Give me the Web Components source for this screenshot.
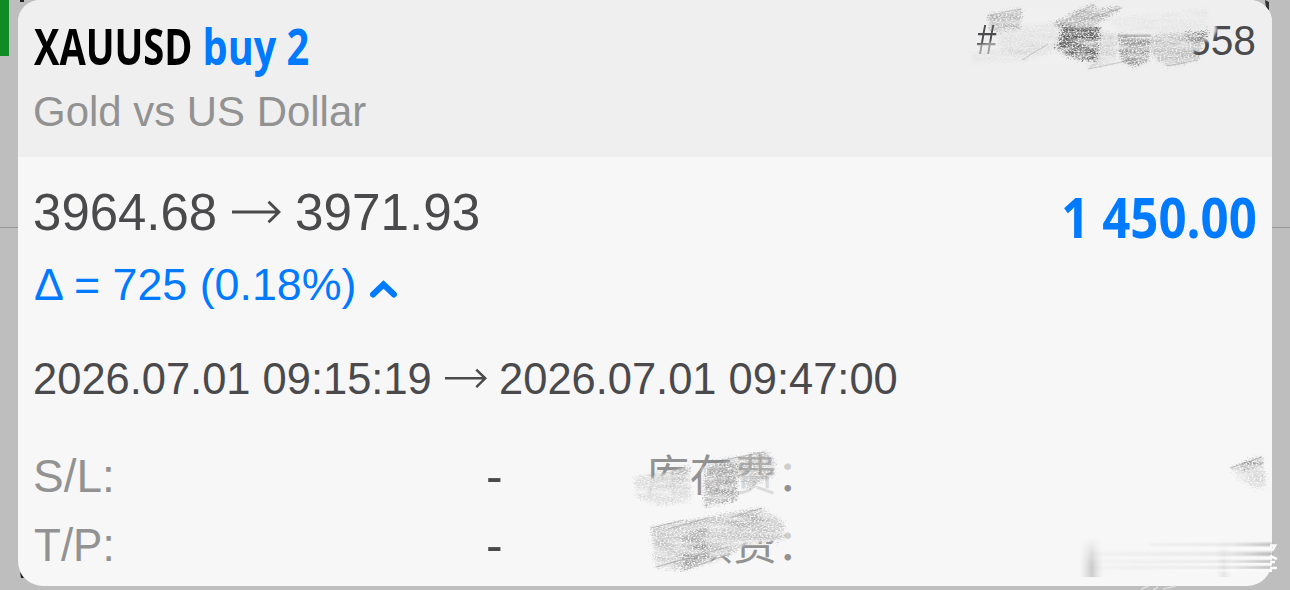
<!DOCTYPE html>
<html lang="zh">
<head>
<meta charset="utf-8">
<title>XAUUSD</title>
<style>
  body {
    margin: 0;
    width: 1290px;
    height: 590px;
    overflow: hidden;
    position: relative;
    background: #bebebe;
    font-family: "Liberation Sans", "Noto Sans CJK SC", sans-serif;
  }
</style>
</head>
<body>
<chart-backdrop></chart-backdrop>
<deal-card>
  <deal-header slot="header">
    <fit-text slot="symbol" face="Open Sans" weight="700" size="50" width="157">XAUUSD</fit-text>
    <fit-text slot="side" face="Open Sans" weight="700" size="50" width="103">buy 2</fit-text>
    <fit-text slot="ticket-start" size="42" width="20">#</fit-text>
    <fit-text slot="ticket-end" size="43" width="66">558</fit-text>
    <fit-text slot="name" size="42.5" width="331">Gold vs US Dollar</fit-text>
  </deal-header>
  <deal-prices>
    <fit-text slot="open" size="52.5" width="180">3964.68</fit-text>
    <fit-text slot="close" size="52.5" width="181">3971.93</fit-text>
    <fit-text slot="profit" face="Open Sans" weight="700" size="56" width="191">1 450.00</fit-text>
    <fit-text slot="delta" size="45" width="322">Δ = 725 (0.18%)</fit-text>
    <fit-text slot="opened" size="44.5" width="395">2026.07.01 09:15:19</fit-text>
    <fit-text slot="closed" size="44.5" width="396">2026.07.01 09:47:00</fit-text>
  </deal-prices>
  <deal-field label="S/L:" label-width="76" cost="库存费：">-</deal-field>
  <deal-field label="T/P:" label-width="76" cost="手续费：">-</deal-field>
</deal-card>
<scribble-layer></scribble-layer>

<script>
  // one run of text, squeezed so its ink is exactly `width` px wide
  class FitText extends HTMLElement {
    constructor() {
      super();
      this.attachShadow({ mode: 'open' });
      this.shadowRoot.innerHTML = `
        <style>
          :host {
            display: block;
            flex: none;
            white-space: nowrap;
          }
          span {
            display: block;
            width: max-content;
            transform-origin: 0 0;
          }
        </style>
        <span><slot></slot></span>
      `;
    }

    connectedCallback() {
      const face = this.getAttribute('face') || 'Liberation Sans';
      const weight = this.getAttribute('weight') || '400';
      const size = this.getAttribute('size');
      const width = Number(this.getAttribute('width'));
      const ctx = document.createElement('canvas').getContext('2d');
      ctx.font = `${weight} ${size}px "${face}"`;
      const box = ctx.measureText(this.textContent);
      const left = -box.actualBoundingBoxLeft;
      const scale = width / (box.actualBoundingBoxRight - left);

      this.style.width = width + 'px';
      this.style.font = `${weight} ${size}px/1 "${face}", sans-serif`;
      this.style.lineHeight = 'inherit';
      this.shadowRoot.querySelector('span').style.transform =
        `scaleX(${scale}) translateX(${-left}px)`;
    }
  }

  class LongArrow extends HTMLElement {
    constructor() {
      super();
      this.attachShadow({ mode: 'open' });
      this.shadowRoot.innerHTML = `
        <style>
          :host { display: block; flex: none; }
          svg { display: block; width: 100%; }
        </style>
        <svg viewBox="0 0 49 24" fill="none" stroke="#4a4a4d" stroke-width="2.9">
          <path d="M0 12H47M36.5 1.8L47 12L36.5 22.2"/>
        </svg>
      `;
    }
  }

  class ChartBackdrop extends HTMLElement {
    constructor() {
      super();
      this.attachShadow({ mode: 'open' });
      this.shadowRoot.innerHTML = `
        <style>
          :host { position: absolute; inset: 0; }
          svg { display: block; }
        </style>
        <svg width="1290" height="590">
          <rect width="9" height="56" fill="#118b25"/>
          <path d="M0 227.5H1290" stroke="#989898"/>
          <path d="M20 0H24V2H20ZM20 572L24 578H21Z" fill="#222"/>
          <path d="M1265 0L1269 2V11L1266 8Z" fill="#333"/>
        </svg>
      `;
    }
  }

  class DealCard extends HTMLElement {
    constructor() {
      super();
      this.attachShadow({ mode: 'open' });
      this.shadowRoot.innerHTML = `
        <style>
          :host {
            display: flex;
            flex-direction: column;
            position: relative;
            box-sizing: border-box;
            margin: 0 18px;
            height: 586px;
            overflow: hidden;
            border-radius: 22px 22px 25px 25px;
            background: #f7f7f7;
          }
        </style>
        <slot name="header"></slot>
        <slot></slot>
      `;
    }
  }

  class DealHeader extends HTMLElement {
    constructor() {
      super();
      this.attachShadow({ mode: 'open' });
      this.shadowRoot.innerHTML = `
        <style>
          :host {
            display: block;
            box-sizing: border-box;
            height: 157px;
            padding: 10px 17px 0 16px;
            background: #efefef;
          }
          .row { display: flex; line-height: 72px; height: 72px; }
          .symbol { color: #000; }
          .side { color: #007aff; margin-left: 14px; }
          .ticket {
            display: flex;
            gap: 192px;
            margin-left: auto;
            margin-top: -6px;
            color: #4a4a4d;
          }
          .name { line-height: 60px; color: #929292; margin-left: 1px; }
        </style>
        <div class="row">
          <div class="symbol"><slot name="symbol"></slot></div>
          <div class="side"><slot name="side"></slot></div>
          <div class="ticket">
            <slot name="ticket-start"></slot>
            <slot name="ticket-end"></slot>
          </div>
        </div>
        <div class="name"><slot name="name"></slot></div>
      `;
    }
  }

  class DealPrices extends HTMLElement {
    constructor() {
      super();
      this.attachShadow({ mode: 'open' });
      this.shadowRoot.innerHTML = `
        <style>
          :host {
            display: block;
            box-sizing: border-box;
            height: 285px;
            padding: 20px 17px 0 17px;
            color: #4a4a4d;
          }
          .row { display: flex; align-items: center; }
          .price { line-height: 70px; height: 70px; }
          .price long-arrow { width: 49px; margin: 0 16px 0 17px; }
          .profit { margin-left: auto; color: #007aff; padding-top: 8px; }
          .delta { line-height: 75px; height: 72px; align-items: flex-start; color: #007aff; }
          .delta svg { margin: 32px 0 0 13px; }
          .time { line-height: 61px; height: 61px; margin-top: 29px; }
          .time long-arrow { width: 42px; margin: 0 14px 0 15px; }
        </style>
        <div class="row price">
          <slot name="open"></slot>
          <long-arrow></long-arrow>
          <slot name="close"></slot>
          <div class="profit"><slot name="profit"></slot></div>
        </div>
        <div class="row delta">
          <slot name="delta"></slot>
          <svg width="27" height="19" viewBox="0 0 27 19" fill="none" stroke="#007aff"
            stroke-width="6" stroke-linecap="round"><path d="M3 15.5L13.5 5.5L24 15.5"/></svg>
        </div>
        <div class="row time">
          <slot name="opened"></slot>
          <long-arrow></long-arrow>
          <slot name="closed"></slot>
        </div>
      `;
    }
  }

  class DealField extends HTMLElement {
    constructor() {
      super();
      this.attachShadow({ mode: 'open' });
    }

    connectedCallback() {
      this.shadowRoot.innerHTML = `
        <style>
          :host {
            display: grid;
            grid-template-columns: 451px 160px 1fr;
            flex: none;
            height: 69px;
            line-height: 69px;
            padding-left: 17px;
            color: #929292;
          }
          .value { color: #4a4a4d; font-size: 50px; }
          .cost {
            font-size: 43px;
            line-height: 60px;
            letter-spacing: 0.7px;
            font-family: "Noto Sans CJK SC", sans-serif;
            white-space: nowrap;
          }
        </style>
        <fit-text size="46" width="${this.getAttribute('label-width')}">${this.getAttribute('label')}</fit-text>
        <div class="value"><slot></slot></div>
        <div class="cost">${this.getAttribute('cost')}</div>
      `;
    }
  }

  // eraser marks over the ticket number and the costs
  class ScribbleLayer extends HTMLElement {
    constructor() {
      super();
      this.attachShadow({ mode: 'open' });
      this.shadowRoot.innerHTML = `
        <style>
          :host { position: absolute; inset: 0; }
          svg { display: block; }
        </style>
        <svg width="1290" height="590">
          <defs>
            <filter id="grain" x="-10%" y="-10%" width="120%" height="120%">
              <feTurbulence type="fractalNoise" baseFrequency="0.5 0.8" numOctaves="3" seed="4" result="n"/>
              <feColorMatrix in="n" values="0 0 0 0 0  0 0 0 0 0  0 0 0 0 0  0 0 0 3 -0.8" result="holes"/>
              <feTurbulence type="fractalNoise" baseFrequency="0.04 0.2" numOctaves="2" seed="9" result="m"/>
              <feColorMatrix in="m" values="0 0 0 0 0  0 0 0 0 0  0 0 0 0 0  0 0 0 1.6 0" result="bands"/>
              <feGaussianBlur in="SourceGraphic" stdDeviation="1.3" result="edge"/>
              <feDisplacementMap in="edge" in2="n" scale="12" xChannelSelector="R" yChannelSelector="G" result="rough"/>
              <feComposite in="rough" in2="holes" operator="in" result="grained"/>
              <feComposite in="grained" in2="bands" operator="in"/>
              <feGaussianBlur stdDeviation="0.6"/>
            </filter>
            <filter id="soft"><feGaussianBlur stdDeviation="1"/></filter>
            <linearGradient id="smear" x2="1">
              <stop offset="0" stop-color="#d5d5d5" stop-opacity="0"/>
              <stop offset=".5" stop-color="#cbcbcb"/>
              <stop offset="1" stop-color="#e5e5e5" stop-opacity="0"/>
            </linearGradient>
            <linearGradient id="fade" x2="0" y2="1">
              <stop offset="0" stop-color="#f7f7f7"/>
              <stop offset="1" stop-color="#f7f7f7" stop-opacity="0"/>
            </linearGradient>
            <linearGradient id="streak" gradientUnits="userSpaceOnUse" x1="1090" x2="1272">
              <stop offset="0" stop-color="#bbb" stop-opacity=".08"/>
              <stop offset=".75" stop-color="#aaa" stop-opacity=".2"/>
              <stop offset="1" stop-color="#888" stop-opacity=".6"/>
            </linearGradient>
            <linearGradient id="brush" gradientUnits="userSpaceOnUse" x1="1150" x2="1272">
              <stop offset="0" stop-color="#fafafa" stop-opacity="0"/>
              <stop offset="1" stop-color="#fafafa"/>
            </linearGradient>
          </defs>

          <!-- ticket -->
          <g filter="url(#soft)">
            <path d="M998 14L1020 8L1184 8L1206 22L1208 36L1203 42L1196 47L1190 60L1020 66L1000 50Z" fill="#f0f0f0"/>
            <path d="M1204 17L1213 16L1217 30L1212 40L1206 42Z" fill="#efefef" opacity=".85"/>
            <path d="M972 46L998 40V58H972Z" fill="#efefef" opacity=".5"/>
          </g>
          <g filter="url(#grain)">
            <path d="M988 15L1022 8L1020 28L990 31Z" fill="#777" opacity=".5"/>
            <path d="M996 28L1060 22L1055 52L1024 61L1000 48Z" fill="#888" opacity=".15"/>
            <path d="M972 52L1046 40L1024 60L972 64Z" fill="#aaa" opacity=".15"/>
            <path d="M1052 24L1094 2L1096 10L1124 6L1094 26L1062 30Z" fill="#777" opacity=".55"/>
            <path d="M1062 27L1099 28L1097 60L1078 60L1056 49Z" fill="#555" opacity=".9"/>
            <path d="M1060 28L1100 28L1098 60L1064 56Z" fill="#555" opacity=".4"/>
            <path d="M1096 30L1116 34L1116 62L1086 70L1098 56Z" fill="#888" opacity=".3"/>
            <path d="M1118 36L1151 38L1148 61L1134 67L1120 60Z" fill="#666" opacity=".65"/>
            <path d="M1108 18L1208 8L1207 28L1164 34L1118 31Z" fill="#999" opacity=".12"/>
            <path d="M1151 36L1184 32L1202 41L1199 60L1168 67L1152 56Z" fill="#777" opacity=".42"/>
            <path d="M1184 33L1209 31L1203 43L1190 43Z" fill="#444" opacity=".7"/>
          </g>
          <g filter="url(#soft)" fill="none" stroke="#555" stroke-width="2.2" opacity=".55">
            <path d="M1064 28.5H1100M1118 36H1151"/>
          </g>
          <g fill="none" stroke="#777" stroke-width="1" opacity=".3">
            <path d="M990 15L1021 9M1060 25L1094 4M1074 23L1122 8M1022 60L1048 44M1088 69L1142 58M1167 66L1198 60"/>
          </g>

          <!-- costs -->
          <g filter="url(#soft)" fill="#f7f7f7">
            <path d="M648 479L690 466L692 503H646Z" opacity=".88"/>
            <path d="M702 468L737 460V503H702Z" opacity=".75"/>
            <path d="M737 476L782 476V500H737Z" opacity=".72"/>
            <path d="M738 452L778 450L777 477L738 479Z" opacity=".4"/>
            <path d="M644 519L776 509L782 540L745 544L728 556L712 558L708 572H644Z"/>
            <path d="M784 459H800V473H784ZM784 528H800V542H784Z" opacity=".6"/>
          </g>
          <g filter="url(#grain)">
            <path d="M634 477L656 472L690 466L691 502L658 505L636 497Z" fill="#888" opacity=".27"/>
            <path d="M672 469L690 465L688 482L670 479Z" fill="#888" opacity=".35"/>
            <path d="M705 466L736 461L737 500L704 507Z" fill="#777" opacity=".62"/>
            <path d="M708 462L766 452L775 460V475L748 489L736 472Z" fill="#777" opacity=".42"/>
            <path d="M651 527L684 521L760 508L784 522L784 540L742 546L727 557L686 570L656 568Z" fill="#777" opacity=".4"/>
            <path d="M683 534L707 526L709 562L683 569Z" fill="#777" opacity=".45"/>
            <path d="M728 516L762 508L765 525L732 529Z" fill="#777" opacity=".3"/>
            <path d="M1230 468L1262 456L1267 488L1256 489L1240 479Z" fill="#888" opacity=".3"/>
            <path d="M1236 466L1262 456L1263 466L1246 470Z" fill="#777" opacity=".6"/>
          </g>
          <g fill="none" stroke="#888" stroke-width="1.1" opacity=".45">
            <path d="M708 463L765 452M651 528L684 520M668 529L708 518M730 518L762 508M656 567L728 547M684 570L730 554M1230 468L1262 457"/>
          </g>

          <!-- watermark smear -->
          <rect x="1080" y="538" width="24" height="39" fill="url(#smear)"/>
          <rect x="1216" y="538" width="16" height="39" fill="url(#smear)" opacity=".4"/>
          <rect x="1078" y="537" width="156" height="28" fill="url(#fade)"/>
          <g fill="url(#streak)" filter="url(#soft)">
            <path d="M1150 543H1272V546H1150ZM1090 552H1272V556H1090ZM1090 560H1272V563H1090ZM1090 566H1272V569H1090Z"/>
          </g>
          <path d="M1150 547H1272V550H1150ZM1150 556.5H1272V559.5H1150ZM1150 563H1272V565.5H1150ZM1150 569H1272V572H1150Z" fill="url(#brush)"/>
          <path d="M1270 545.5H1275L1272 551M1270 556L1277 559M1270 562H1275M1270 568H1277" fill="none" stroke="#fafafa" stroke-width="2.6"/>
          <path d="M1141 589L1149 586M1153 590L1158 587M1163 589L1176 586" stroke="#ddd" stroke-width="1.5"/>
        </svg>
      `;
    }
  }

  customElements.define('fit-text', FitText);
  customElements.define('long-arrow', LongArrow);
  customElements.define('chart-backdrop', ChartBackdrop);
  customElements.define('deal-card', DealCard);
  customElements.define('deal-header', DealHeader);
  customElements.define('deal-prices', DealPrices);
  customElements.define('deal-field', DealField);
  customElements.define('scribble-layer', ScribbleLayer);
</script>
</body>
</html>
